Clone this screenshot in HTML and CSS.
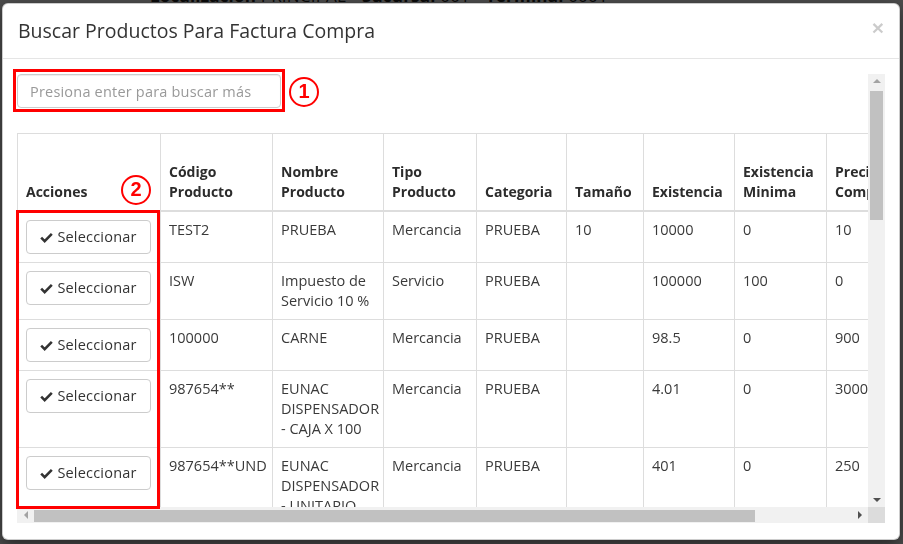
FILE: index.html
```html
<!DOCTYPE html>
<html lang="es">
  <head>
    <meta charset="utf-8">
    <title>Factura Compra</title>
    <link rel="stylesheet" href="styles.css">
  </head>
  <body>
    <!-- cabecera de la pagina, queda detras del modal -->
    <div class="topbar">
      <p><b>Localización</b> PRINCIPAL • <b>Sucursal</b> 001 • <b>Terminal</b> 0001</p>
    </div>
    <div class="backdrop"></div>

    <div class="modal">
      <div class="modal-header">
        <h4 class="modal-title">Buscar Productos Para Factura Compra</h4>
        <button class="close" type="button">&times;</button>
      </div>
      <div class="modal-body">
        <div class="scrollframe">
          <div class="viewport">
            <input class="search" type="text" placeholder="Presiona enter para buscar más">
            <table class="grid">
              <colgroup>
                <col class="c-acc"><col class="c-cod"><col class="c-nom"><col class="c-tipo"><col class="c-cat">
                <col class="c-tam"><col class="c-exi"><col class="c-min"><col class="c-pc"><col class="c-pv"><col class="c-imp">
              </colgroup>
              <thead>
                <tr>
                  <th>Acciones</th><th>Código Producto</th><th>Nombre Producto</th><th>Tipo Producto</th><th>Categoria</th>
                  <th>Tamaño</th><th>Existencia</th><th>Existencia Minima</th><th>Precio Compra</th><th>Precio Venta Público</th><th>Impuesto</th>
                </tr>
              </thead>
              <tbody>
                <tr><td><button class="pick"><svg viewBox="0 0 14 12"><path d="M1.2 6.2 L5 10 L12.8 2"/></svg>Seleccionar</button></td><td>TEST2</td><td>PRUEBA</td><td>Mercancia</td><td>PRUEBA</td><td>10</td><td>10000</td><td>0</td><td>10</td><td>15</td><td>19</td></tr>
                <tr><td><button class="pick"><svg viewBox="0 0 14 12"><path d="M1.2 6.2 L5 10 L12.8 2"/></svg>Seleccionar</button></td><td>ISW</td><td>Impuesto de Servicio 10 %</td><td>Servicio</td><td>PRUEBA</td><td></td><td>100000</td><td>100</td><td>0</td><td>0</td><td>0</td></tr>
                <tr><td><button class="pick"><svg viewBox="0 0 14 12"><path d="M1.2 6.2 L5 10 L12.8 2"/></svg>Seleccionar</button></td><td>100000</td><td>CARNE</td><td>Mercancia</td><td>PRUEBA</td><td></td><td>98.5</td><td>0</td><td>900</td><td>1200</td><td>0</td></tr>
                <tr><td><button class="pick"><svg viewBox="0 0 14 12"><path d="M1.2 6.2 L5 10 L12.8 2"/></svg>Seleccionar</button></td><td>987654**</td><td>EUNAC DISPENSADOR - CAJA X 100</td><td>Mercancia</td><td>PRUEBA</td><td></td><td>4.01</td><td>0</td><td>3000</td><td>3800</td><td>19</td></tr>
                <tr><td><button class="pick"><svg viewBox="0 0 14 12"><path d="M1.2 6.2 L5 10 L12.8 2"/></svg>Seleccionar</button></td><td>987654**UND</td><td>EUNAC DISPENSADOR - UNITARIO</td><td>Mercancia</td><td>PRUEBA</td><td></td><td>401</td><td>0</td><td>250</td><td>300</td><td>19</td></tr>
                <tr><td><button class="pick"><svg viewBox="0 0 14 12"><path d="M1.2 6.2 L5 10 L12.8 2"/></svg>Seleccionar</button></td><td>7701234</td><td>ACEITE 1000 ML</td><td>Mercancia</td><td>PRUEBA</td><td>1</td><td>35</td><td>5</td><td>8500</td><td>9900</td><td>19</td></tr>
                <tr><td><button class="pick"><svg viewBox="0 0 14 12"><path d="M1.2 6.2 L5 10 L12.8 2"/></svg>Seleccionar</button></td><td>DOM01</td><td>DOMICILIO</td><td>Servicio</td><td>PRUEBA</td><td></td><td>0</td><td>0</td><td>0</td><td>3000</td><td>0</td></tr>
                <tr><td><button class="pick"><svg viewBox="0 0 14 12"><path d="M1.2 6.2 L5 10 L12.8 2"/></svg>Seleccionar</button></td><td>7702001</td><td>ARROZ 500 G</td><td>Mercancia</td><td>PRUEBA</td><td>500</td><td>120</td><td>10</td><td>1800</td><td>2200</td><td>5</td></tr>
              </tbody>
            </table>
          </div>
          <!-- barras de desplazamiento -->
          <div class="vbar">
            <span class="arrow arrow-up"></span>
            <div class="track"><div class="thumb"></div></div>
            <span class="arrow arrow-down"></span>
          </div>
          <div class="hbar">
            <span class="arrow arrow-left"></span>
            <div class="track"><div class="thumb"></div></div>
            <span class="arrow arrow-right"></span>
          </div>
          <div class="corner"></div>
        </div>
      </div>

      <!-- marcas de ayuda sobre el formulario -->
      <div class="mark mark-search"></div>
      <div class="mark mark-actions"></div>
      <span class="step step-1">1</span>
      <span class="step step-2">2</span>
    </div>
  </body>
</html>
```

FILE: styles.css
```css
*{
  box-sizing: border-box;
}
body{
  margin:0;
  background:#fff;
  font-family: "Open Sans", sans-serif;
  font-size:14.5px;
  letter-spacing:.2px;
  line-height:20px;
  color:#333;
  overflow:hidden;
  height:544px;
}
.topbar{
  height:6px;
  overflow:hidden;
  padding-left:150px;
}
.topbar p{
  margin:-14px 0 0;
  font-size:17px;
  color:#222;
}
.backdrop{
  position:fixed;
  inset:0;
  background:rgba(0,0,0,.7);
}

/* modal */
.modal{
  position:fixed;
  left:2px;
  top:3px;
  width:898px;
  height:537px;
  background:#fff;
  border:1px solid rgba(0,0,0,.2);
  border-radius:6px;
  box-shadow:0 5px 15px rgba(0,0,0,.5);
}
.modal-header{
  display:flex;
  justify-content:space-between;
  align-items:center;
  padding:15px;
  border-bottom:1px solid #e5e5e5;
}
.modal-title{
  margin:0;
  font-size:19.5px;
  font-weight:400;
  letter-spacing:0;
  line-height:24px;
  color:#333;
}
.close{
  padding:0;
  border:0;
  background:none;
  font-family:"Liberation Sans", sans-serif;
  font-size:21px;
  font-weight:bold;
  line-height:1;
  color:#000;
  opacity:.2;
  margin-top:-8px;
}
.modal-body{
  padding:15px 14px;
}

/* area con desplazamiento */
.scrollframe{
  display:grid;
  grid-template-columns:851px 17px;
  grid-template-rows:433px 16px;
}
.viewport{
  overflow:hidden;
}
.vbar,
.hbar{
  display:flex;
  background:#f1f1f1;
}
.vbar{
  flex-direction:column;
}
.vbar .track{
  flex:1;
  padding:0 2px;
}
.vbar .thumb{
  height:129px;
  background:#c1c1c1;
}
.hbar .track{
  flex:1;
  padding:3px 0 1px;
}
.hbar .thumb{
  width:721px;
  height:100%;
  background:#c1c1c1;
}
.corner{
  background:#dcdcdc;
}
.arrow{
  display:flex;
  align-items:center;
  justify-content:center;
  flex:none;
  width:17px;
  height:17px;
}
.hbar .arrow{
  height:16px;
}
.arrow::before{
  content:"";
  border:4px solid transparent;
}
.arrow-up::before{
  border-top:0;
  border-bottom-color:#a3a3a3;
  margin-top:-4px;
}
.arrow-down::before{
  border-bottom:0;
  border-top-color:#505050;
  margin-top:2px;
}
.arrow-left::before{
  border-left:0;
  border-right-color:#a3a3a3;
}
.arrow-right::before{
  border-right:0;
  border-left-color:#505050;
}

.search{
  display:block;
  width:264px;
  height:34px;
  margin-bottom:25px;
  padding:6px 12px;
  border:1px solid #ccc;
  border-radius:4px;
  box-shadow:inset 0 1px 1px rgba(0,0,0,.075);
  font:inherit;
  letter-spacing:inherit;
  color:#555;
}
.search::placeholder{
  color:#999;
}

/* tabla de productos */
.grid{
  width:966px;
  table-layout:fixed;
  border-collapse:collapse;
  border:1px solid #ddd;
}
.grid th,
.grid td{
  padding:8px;
  border:1px solid #ddd;
  text-align:left;
  vertical-align:top;
  letter-spacing:0;
  color:#3a3a3a;
}
.grid th{
  vertical-align:bottom;
  border-bottom-width:2px;
  font-weight:700;
  font-size:14px;
  color:#2c2c2c;
}
.c-acc{ width:143px; }
.c-cod{ width:112px; }
.c-nom{ width:111px; }
.c-tipo{ width:93px; }
.c-cat{ width:90px; }
.c-tam{ width:77px; }
.c-exi{ width:91px; }
.c-min{ width:92px; }
.c-pc{ width:92px; }
.c-pv{ width:78px; }
.c-imp{ width:79px; }

.pick{
  display:flex;
  align-items:center;
  justify-content:center;
  gap:4px;
  width:125px;
  height:34px;
  padding:6px 8px;
  border:1px solid #ccc;
  border-radius:4px;
  background:#fff;
  font:inherit;
  letter-spacing:.2px;
  color:#333;
}
.pick svg{
  width:13px;
  height:11px;
  fill:none;
  stroke:#333;
  stroke-width:2.8;
}

/* recuadros y numeros rojos */
.mark{
  position:absolute;
  border:3px solid #f00;
}
.mark-search{
  left:10px;
  top:65px;
  width:272px;
  height:43px;
}
.mark-actions{
  left:13px;
  top:206px;
  width:144px;
  height:299px;
}
.step{
  position:absolute;
  width:30px;
  height:30px;
  border:2.5px solid #f00;
  border-radius:50%;
  font-family:"Liberation Sans", sans-serif;
  font-weight:bold;
  font-size:20px;
  letter-spacing:0;
  line-height:25px;
  text-align:center;
  color:#f00;
}
.step-1{
  left:286px;
  top:73px;
}
.step-2{
  left:118px;
  top:171px;
}
```
